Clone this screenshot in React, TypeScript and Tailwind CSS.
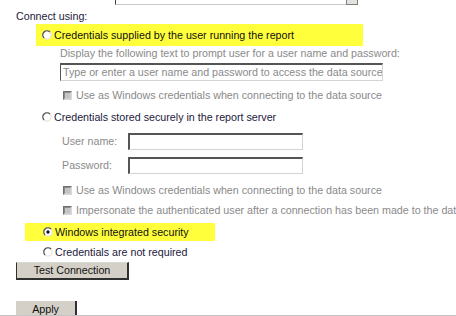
import React from "react";

function Radio({ checked = false }: { checked?: boolean }) {
  return (
    <svg width="10" height="10" viewBox="0 0 12 12" className="shrink-0">
      <circle cx="6" cy="6" r="5" fill="#ffffff" stroke="#e4e2dc" strokeWidth="1.4" />
      <path d="M2.46 9.54 A5 5 0 0 1 9.54 2.46" fill="none" stroke="#505050" strokeWidth="1.6" />
      {checked && <circle cx="6" cy="6" r="2" fill="#111111" />}
    </svg>
  );
}

function Check() {
  return (
    <span className="block w-[9px] h-[9px] shrink-0 border border-t-[#707070] border-l-[#707070] border-b-[#d8d8d8] border-r-[#d8d8d8] bg-[#b4b4b4]">
      <span className="block w-full h-full border border-t-[#8a8a8a] border-l-[#8a8a8a] border-b-[#cfcfcf] border-r-[#cfcfcf] bg-[#c4c4c4]" />
    </span>
  );
}

function CheckRow({ children }: { children: React.ReactNode }) {
  return (
    <div className="ml-[63px] h-[14px] flex items-center gap-[4px] text-[#8a8a8a] whitespace-nowrap">
      <Check />
      <span className="leading-[14px]">{children}</span>
    </div>
  );
}

function TextBox({ className = "" }: { className?: string }) {
  return (
    <div
      className={
        "h-[17px] bg-white border-t-2 border-l-2 border-t-[#555555] border-l-[#555555] border-r border-b border-r-[#d4d4d4] border-b-[#d4d4d4] " +
        className
      }
    />
  );
}

export default function App() {
  return (
    <div className="w-[456px] h-[316px] overflow-hidden bg-white font-['Liberation_Sans',Arial,sans-serif] text-[10.7px] text-[#111111] flex flex-col">
      {/* bottom of the field above */}
      <div className="h-[5px] ml-[115px] w-[243px] flex">
        <div className="flex-1 border-l border-b border-l-[#404040] border-b-[#c8c8c8]" />
        <div className="w-[12px] border-l border-r border-b border-[#808080] bg-[#e4e2dc]" />
      </div>

      <div className="mt-[4px] ml-[16px] h-[14px] leading-[14px] text-[#22183c]">Connect using:</div>

      <div className="mt-[1px] ml-[36px] w-[327px] h-[22px] bg-[#ffff3c] flex items-center pl-[6px] gap-[2px] whitespace-nowrap">
        <Radio />
        <span className="leading-[14px]">Credentials supplied by the user running the report</span>
      </div>

      <div className="ml-[60px] h-[14px] leading-[14px] text-[#8a8a8a] whitespace-nowrap">
        Display the following text to prompt user for a user name and password:
      </div>

      <div className="mt-[3px] ml-[60px] w-[323px] h-[18px] bg-white border-t-2 border-l border-t-[#555555] border-l-[#555555] border-r border-b border-r-[#d4d4d4] border-b-[#d4d4d4] flex items-center pl-[2px] text-[#8a8a8a] whitespace-nowrap overflow-hidden">
        Type or enter a user name and password to access the data source
      </div>

      <div className="mt-[7px]">
        <CheckRow>Use as Windows credentials when connecting to the data source</CheckRow>
      </div>

      <div className="mt-[8px] ml-[42px] h-[14px] flex items-center gap-[2px] whitespace-nowrap text-[#22183c]">
        <Radio />
        <span className="leading-[14px]">Credentials stored securely in the report server</span>
      </div>

      <div className="mt-[9px] ml-[62px] h-[17px] flex items-center text-[#8a8a8a]">
        <span className="w-[66px]">User name:</span>
        <TextBox className="w-[175px]" />
      </div>

      <div className="mt-[7px] ml-[62px] h-[17px] flex items-center text-[#8a8a8a]">
        <span className="w-[66px]">Password:</span>
        <TextBox className="w-[175px]" />
      </div>

      <div className="mt-[9px]">
        <CheckRow>Use as Windows credentials when connecting to the data source</CheckRow>
      </div>

      <div className="mt-[6px] overflow-hidden">
        <CheckRow>Impersonate the authenticated user after a connection has been made to the dat</CheckRow>
      </div>

      <div className="mt-[6px] ml-[25px] w-[190px] h-[18px] bg-[#ffff3c] flex items-center pl-[18px] gap-[2px] whitespace-nowrap">
        <Radio checked />
        <span className="leading-[14px]">Windows integrated security</span>
      </div>

      <div className="mt-[4px] ml-[43px] h-[14px] flex items-center gap-[2px] whitespace-nowrap text-[#22183c]">
        <Radio />
        <span className="leading-[14px]">Credentials are not required</span>
      </div>

      <button className="mt-[3px] ml-[16px] w-[113px] h-[18px] bg-[#d4d0c8] border border-[#303030] border-r-2 border-b-2 border-t-[#d8d8d8] flex items-center justify-center text-[#111111] leading-none">
        Test Connection
      </button>

      <div className="mt-[21px] ml-[16px] w-[61px] h-[14px] bg-[#d4d0c8] border-r-2 border-r-[#303030] flex items-end justify-center text-[#111111] leading-[11px]">
        Apply
      </div>

      <div className="h-[1px] bg-[#c4c4c4]" />
    </div>
  );
}
